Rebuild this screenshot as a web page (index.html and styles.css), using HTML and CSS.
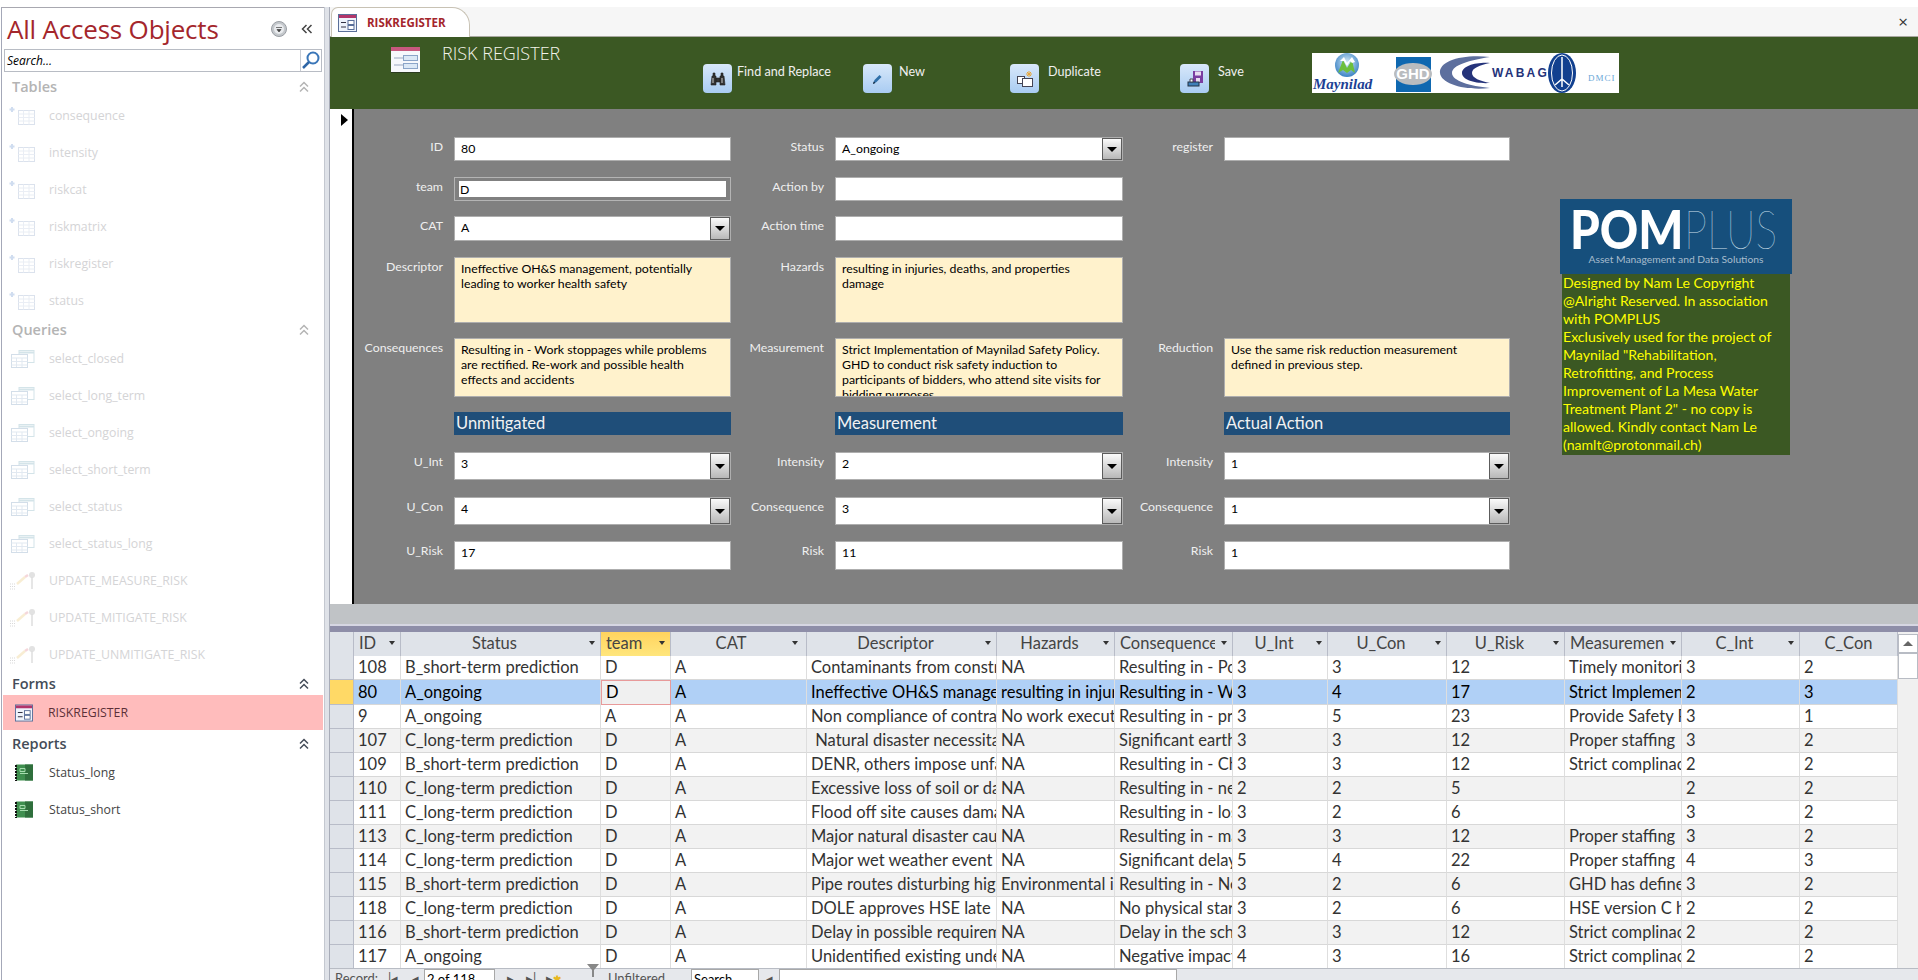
FILE: index.html
```html
<!DOCTYPE html>
<html lang="en">
<head>
  <meta charset="UTF-8" />
  <meta name="viewport" content="width=device-width, initial-scale=1.0"/>
  <title>RISK REGISTER</title>
  <link rel="stylesheet" href="styles.css">
</head>
<body>
  <svg class="defs" width="0" height="0">
    <symbol id="i-table" viewBox="0 0 28 20">
      <path d="M4 1v5M1.500 3.500h5" stroke="#3f74c4" stroke-width="2"/>
      <rect x="10.500" y="4.500" width="16" height="14" fill="#fff" stroke="#6d8bb5"/>
      <path d="M10.500 8h16M10.500 11.500h16M10.500 15h16M15.500 4.500v14M21 4.500v14" stroke="#a9bcd6"/>
    </symbol>
    <symbol id="i-query" viewBox="0 0 28 20">
      <rect x="11" y="1.500" width="15" height="12" fill="#fff" stroke="#4f93a8"/>
      <path d="M11 3.500h15" stroke="#4f93a8" stroke-width="2"/>
      <rect x="3.500" y="5.500" width="16" height="13" fill="#fff" stroke="#4a78a8"/>
      <path d="M3.500 9h16M3.500 12.500h16M3.500 16h16M8.500 9v9M14 9v9" stroke="#8aa8c8"/>
    </symbol>
    <symbol id="i-update" viewBox="0 0 28 20">
      <path d="M2 13h5M2 15.500h5M2 18h5" stroke="#666" stroke-dasharray="1 1"/>
      <path d="M9 13l8-7" stroke="#e6b84a" stroke-width="2.500"/>
      <path d="M17 6l3-2" stroke="#d65a6a" stroke-width="2.500"/>
      <circle cx="24" cy="4" r="3" fill="#888"/>
      <path d="M24 6v12" stroke="#777" stroke-width="1.500"/>
    </symbol>
    <symbol id="i-form" viewBox="0 0 19 18">
      <rect x=".500" y=".500" width="18" height="17" fill="#eef3fb" stroke="#5a6f99"/>
      <rect x="1" y="1" width="17" height="3" fill="#b2356a"/>
      <path d="M3 8.500h5M3 13h5" stroke="#334" stroke-width="1.200"/>
      <rect x="10" y="6.500" width="6" height="4" fill="#fff" stroke="#5a6f99"/>
      <rect x="10" y="11.500" width="6" height="4" fill="#fff" stroke="#5a6f99"/>
    </symbol>
    <symbol id="i-form-lg" viewBox="0 0 31 27" preserveAspectRatio="none">
      <rect x="1" y="1" width="29" height="25" fill="#f6f8fc"/>
      <rect x="1" y="1" width="29" height="4" fill="#c8587e"/>
      <path d="M4 12h10M4 19h10" stroke="#9aa8c0"/>
      <rect x="13.500" y="9.500" width="14" height="5" fill="#dbe8f6" stroke="#8aa4c8"/>
      <rect x="13.500" y="17.500" width="14" height="5" fill="#dbe8f6" stroke="#8aa4c8"/>
      <path d="M1 26.500h29" stroke="#2a3a20" stroke-width="1"/>
    </symbol>
    <symbol id="i-report" viewBox="0 0 18 17">
      <rect x="1" y="0" width="17" height="16" fill="#3f8f4f"/>
      <rect x="10" y="0" width="8" height="16" fill="#2f6f3c"/>
      <path d="M1 .5v16" stroke="#111" stroke-width="2" stroke-dasharray="2 1"/>
      <path d="M5 4h5v3h-5zM5 9h8" fill="none" stroke="#a6dcae"/>
    </symbol>
    <symbol id="i-chev" viewBox="0 0 12 12">
      <path d="M2 5.500l4-4 4 4M2 10.500l4-4 4 4" fill="none" stroke="currentColor" stroke-width="1.500"/>
    </symbol>
  </svg>

  <div class="app">
    <aside class="nav">
      <div class="nav-title">
        <span class="nav-name">All Access Objects</span>
        <svg class="nav-menu" width="16" height="16" viewBox="0 0 16 16">
          <circle cx="8" cy="8" r="7.500" fill="#c4c8cc" stroke="#9a9ea4"/>
          <circle cx="8" cy="8" r="5" fill="#e9ebee"/>
          <path d="M5 6.500h6M6 8.500h4l-2 2.500z" fill="#444" stroke="#444" stroke-width=".7"/>
        </svg>
        <svg class="nav-collapse" width="12" height="12" viewBox="0 0 12 12">
          <path d="M5.500 2l-4 4 4 4M10.500 2l-4 4 4 4" fill="none" stroke="#444" stroke-width="1.500"/>
        </svg>
      </div>
      <div class="nav-search">
        <span class="nav-search-text">Search...</span>
        <span class="nav-search-btn">
          <svg width="20" height="20" viewBox="0 0 20 20">
            <circle cx="12" cy="8" r="5.500" fill="#fff" stroke="#3a76b8" stroke-width="2"/>
            <path d="M8 12l-6 6" stroke="#2f66a6" stroke-width="2.500"/>
          </svg>
        </span>
      </div>

      <div class="nav-head off">Tables <svg class="chev"><use href="#i-chev"/></svg></div>
      <div class="nav-item off"><svg class="ico"><use href="#i-table"/></svg>consequence</div>
      <div class="nav-item off"><svg class="ico"><use href="#i-table"/></svg>intensity</div>
      <div class="nav-item off"><svg class="ico"><use href="#i-table"/></svg>riskcat</div>
      <div class="nav-item off"><svg class="ico"><use href="#i-table"/></svg>riskmatrix</div>
      <div class="nav-item off"><svg class="ico"><use href="#i-table"/></svg>riskregister</div>
      <div class="nav-item off"><svg class="ico"><use href="#i-table"/></svg>status</div>

      <div class="nav-head off">Queries <svg class="chev"><use href="#i-chev"/></svg></div>
      <div class="nav-item off"><svg class="ico"><use href="#i-query"/></svg>select_closed</div>
      <div class="nav-item off"><svg class="ico"><use href="#i-query"/></svg>select_long_term</div>
      <div class="nav-item off"><svg class="ico"><use href="#i-query"/></svg>select_ongoing</div>
      <div class="nav-item off"><svg class="ico"><use href="#i-query"/></svg>select_short_term</div>
      <div class="nav-item off"><svg class="ico"><use href="#i-query"/></svg>select_status</div>
      <div class="nav-item off"><svg class="ico"><use href="#i-query"/></svg>select_status_long</div>
      <div class="nav-item off"><svg class="ico"><use href="#i-update"/></svg>UPDATE_MEASURE_RISK</div>
      <div class="nav-item off"><svg class="ico"><use href="#i-update"/></svg>UPDATE_MITIGATE_RISK</div>
      <div class="nav-item off"><svg class="ico"><use href="#i-update"/></svg>UPDATE_UNMITIGATE_RISK</div>

      <div class="nav-head">Forms <svg class="chev"><use href="#i-chev"/></svg></div>
      <div class="nav-item selected"><svg class="ico-sm"><use href="#i-form"/></svg>RISKREGISTER</div>

      <div class="nav-head">Reports <svg class="chev"><use href="#i-chev"/></svg></div>
      <div class="nav-item"><svg class="ico-sm"><use href="#i-report"/></svg>Status_long</div>
      <div class="nav-item"><svg class="ico-sm"><use href="#i-report"/></svg>Status_short</div>
    </aside>

    <div class="splitter"></div>

    <main class="main">
      <div class="tabs">
        <div class="tab"><svg class="tab-ico"><use href="#i-form"/></svg>RISKREGISTER</div>
        <span class="tab-close">×</span>
      </div>

      <div class="banner">
        <svg class="banner-ico"><use href="#i-form-lg"/></svg>
        <div class="banner-title">RISK REGISTER</div>
        <div class="tool tool-find">
          <span class="tool-btn">
            <svg width="18" height="18" viewBox="0 0 18 18"><path d="M2 15l1-9h4v9zM11 15V6h4l1 9zM7 8h4v4H7zM4 6V3h2v3M12 6V3h2v3" fill="#333" stroke="#222" stroke-width=".6"/><path d="M4 8v5M13 8v5" stroke="#ccc"/></svg>
          </span>
          Find and Replace
        </div>
        <div class="tool tool-new">
          <span class="tool-btn">
            <svg width="18" height="18" viewBox="0 0 18 18"><path d="M4 14l1.500-4 5-5 2 2-5 5z" fill="#2f6fa8"/><path d="M4 14l.800-2.500 1.500 1.500z" fill="#123"/></svg>
          </span>
          New
        </div>
        <div class="tool tool-dup">
          <span class="tool-btn">
            <svg width="20" height="20" viewBox="0 0 20 20"><rect x="2.500" y="7.500" width="7" height="7" fill="#fff" stroke="#445"/><rect x="7.500" y="9.500" width="10" height="8" fill="#fff" stroke="#445"/><path d="M14 2v6M11 5h6M12 3l4 4M16 3l-4 4" stroke="#e8a63a"/></svg>
          </span>
          Duplicate
        </div>
        <div class="tool tool-save">
          <span class="tool-btn">
            <svg width="20" height="20" viewBox="0 0 20 20"><rect x="8" y="2" width="10" height="12" fill="#7a3ea0"/><rect x="10" y="2.500" width="6" height="4" fill="#e8ddf0"/><rect x="11" y="9" width="4" height="4" fill="#e8ddf0"/><rect x="3" y="13" width="11" height="4" fill="#3f7fb8" stroke="#234"/><path d="M5 10h3v3H5z" fill="#fff" stroke="#445"/></svg>
          </span>
          Save
        </div>
        <div class="logos">
          <svg width="307" height="40" viewBox="0 0 307 40">
            <defs>
              <radialGradient id="ball" cx=".5" cy=".4" r=".6"><stop offset="0" stop-color="#d8eefa"/><stop offset="1" stop-color="#3b82c4"/></radialGradient>
            </defs>
            <circle cx="35" cy="12" r="12" fill="url(#ball)"/>
            <path d="M26 20l5-13 4 8 5-8 3 13-4-3-4 3-4-3z" fill="#6cbf3c"/>
            <path d="M28 8l4-4 3 6 5-6 3 5-3 1-2-2-3 5-3-5z" fill="#fff"/>
            <text x="1" y="36" class="logo-may">Maynilad</text>
            <rect x="84" y="4" width="35" height="35" fill="#0f68b0"/>
            <ellipse cx="101" cy="21" rx="19" ry="11" fill="#b9bcbf"/>
            <text x="101" y="26" class="logo-ghd">GHD</text>
            <path d="M178 4C150 1 127 8 128 20c1 11 26 18 50 15C158 33 140 28 140 20S158 7 178 4z" fill="#5d6f9e"/>
            <path d="M178 10c-14-1-28 3-28 10s14 11 28 10c-10-2-18-5-18-10s8-8 18-10z" fill="#25337a"/>
            <text x="180" y="24" class="logo-wab">WABAG</text>
            <ellipse cx="250" cy="20" rx="14" ry="20" fill="#12408f"/>
            <ellipse cx="250" cy="20" rx="10.500" ry="18" fill="none" stroke="#fff" stroke-width="1"/>
            <path d="M250 4v30M243 32l7-6 7 6" stroke="#fff" stroke-width="1.500" fill="none"/>
            <text x="276" y="28" class="logo-dmci">DMCI</text>
          </svg>
        </div>
      </div>

      <div class="detail">
        <div class="selector"><span class="sel-arrow"></span></div>
        <div class="form-grid">
          <label class="lbl">ID</label><div class="fld h24">80</div>
          <label class="lbl">Status</label><div class="fld h24 combo">A_ongoing<span class="drop"></span></div>
          <label class="lbl">register</label><div class="fld h24"></div>

          <label class="lbl">team</label><div class="fld h24 focus"><span class="focus-in">D</span></div>
          <label class="lbl">Action by</label><div class="fld h24"></div>
          <span></span><span></span>

          <label class="lbl">CAT</label><div class="fld h25 combo">A<span class="drop"></span></div>
          <label class="lbl">Action time</label><div class="fld h25"></div>
          <span></span><span></span>

          <label class="lbl">Descriptor</label><div class="fld memo h66">Ineffective OH&amp;S management, potentially<br>leading to worker health safety</div>
          <label class="lbl">Hazards</label><div class="fld memo h66">resulting in injuries, deaths, and properties<br>damage</div>
          <span></span><span></span>

          <label class="lbl">Consequences</label><div class="fld memo h59">Resulting in - Work stoppages while problems<br>are rectified. Re-work and possible health<br>effects and accidents</div>
          <label class="lbl">Measurement</label><div class="fld memo h59">Strict Implementation of Maynilad Safety Policy.<br>GHD to conduct risk safety induction to<br>participants of bidders, who attend site visits for<br>bidding purposes</div>
          <label class="lbl">Reduction</label><div class="fld memo h59">Use the same risk reduction measurement<br>defined in previous step.</div>

          <span></span><div class="section">Unmitigated</div>
          <span></span><div class="section">Measurement</div>
          <span></span><div class="section">Actual Action</div>

          <label class="lbl">U_Int</label><div class="fld h28 combo">3<span class="drop"></span></div>
          <label class="lbl">Intensity</label><div class="fld h28 combo">2<span class="drop"></span></div>
          <label class="lbl">Intensity</label><div class="fld h28 combo">1<span class="drop"></span></div>

          <label class="lbl">U_Con</label><div class="fld h28 combo">4<span class="drop"></span></div>
          <label class="lbl">Consequence</label><div class="fld h28 combo">3<span class="drop"></span></div>
          <label class="lbl">Consequence</label><div class="fld h28 combo">1<span class="drop"></span></div>

          <label class="lbl">U_Risk</label><div class="fld h29">17</div>
          <label class="lbl">Risk</label><div class="fld h29">11</div>
          <label class="lbl">Risk</label><div class="fld h29">1</div>

          <div class="promo">
            <div class="pom">
              <div class="pom-mark"><span class="pom-a">POM</span><span class="pom-b">PLUS</span></div>
              <div class="pom-sub">Asset Management and Data Solutions</div>
            </div>
            <div class="promo-text">Designed by Nam Le Copyright @Alright Reserved. In association with POMPLUS<br>Exclusively used for the project of Maynilad "Rehabilitation, Retrofitting, and Process Improvement of La Mesa Water Treatment Plant 2" - no copy is allowed. Kindly contact Nam Le (namlt@protonmail.ch)</div>
          </div>
        </div>
      </div>

      <div class="band"></div>

      <div class="sheet-wrap">
        <table class="sheet">
          <colgroup>
            <col class="c-sel"><col class="c-id"><col class="c-status"><col class="c-team"><col class="c-cat"><col class="c-desc"><col class="c-haz"><col class="c-cons"><col class="c-uint"><col class="c-ucon"><col class="c-urisk"><col class="c-meas"><col class="c-cint"><col class="c-ccon">
          </colgroup>
          <thead>
            <tr>
              <th class="corner"></th>
              <th><div class="th"><span class="th-l left">ID</span><i class="arr"></i></div></th>
              <th><div class="th"><span class="th-l">Status</span><i class="arr"></i></div></th>
              <th class="hl"><div class="th"><span class="th-l left">team</span><i class="arr"></i></div></th>
              <th><div class="th"><span class="th-l">CAT</span><i class="arr pin"></i></div></th>
              <th><div class="th"><span class="th-l">Descriptor</span><i class="arr"></i></div></th>
              <th><div class="th"><span class="th-l">Hazards</span><i class="arr"></i></div></th>
              <th><div class="th"><span class="th-l left">Consequence</span><i class="arr"></i></div></th>
              <th><div class="th"><span class="th-l">U_Int</span><i class="arr"></i></div></th>
              <th><div class="th"><span class="th-l">U_Con</span><i class="arr"></i></div></th>
              <th><div class="th"><span class="th-l">U_Risk</span><i class="arr"></i></div></th>
              <th><div class="th"><span class="th-l left">Measurement</span><i class="arr"></i></div></th>
              <th><div class="th"><span class="th-l">C_Int</span><i class="arr"></i></div></th>
              <th><div class="th th-end"><span class="th-l">C_Con</span></div></th>
            </tr>
          </thead>
          <tbody>
            <tr><td class="rs"></td><td>108</td><td>B_short-term prediction</td><td>D</td><td>A</td><td>Contaminants from construction</td><td>NA</td><td>Resulting in - Potential</td><td>3</td><td>3</td><td>12</td><td>Timely monitoring</td><td>3</td><td>2</td></tr>
            <tr class="cur"><td class="rs"></td><td>80</td><td>A_ongoing</td><td class="cell-on">D</td><td>A</td><td>Ineffective OH&amp;S management</td><td>resulting in injuries</td><td>Resulting in - Work</td><td>3</td><td>4</td><td>17</td><td>Strict Implementation</td><td>2</td><td>3</td></tr>
            <tr><td class="rs"></td><td>9</td><td>A_ongoing</td><td>A</td><td>A</td><td>Non compliance of contract</td><td>No work execution</td><td>Resulting in - project</td><td>3</td><td>5</td><td>23</td><td>Provide Safety Plan</td><td>3</td><td>1</td></tr>
            <tr><td class="rs"></td><td>107</td><td>C_long-term prediction</td><td>D</td><td>A</td><td>&nbsp;Natural disaster necessitates</td><td>NA</td><td>Significant earthquake</td><td>3</td><td>3</td><td>12</td><td>Proper staffing</td><td>3</td><td>2</td></tr>
            <tr><td class="rs"></td><td>109</td><td>B_short-term prediction</td><td>D</td><td>A</td><td>DENR, others impose unfair</td><td>NA</td><td>Resulting in - Changes</td><td>3</td><td>3</td><td>12</td><td>Strict complinace</td><td>2</td><td>2</td></tr>
            <tr><td class="rs"></td><td>110</td><td>C_long-term prediction</td><td>D</td><td>A</td><td>Excessive loss of soil or damage</td><td>NA</td><td>Resulting in - need</td><td>2</td><td>2</td><td>5</td><td></td><td>2</td><td>2</td></tr>
            <tr><td class="rs"></td><td>111</td><td>C_long-term prediction</td><td>D</td><td>A</td><td>Flood off site causes damage</td><td>NA</td><td>Resulting in - loss</td><td>3</td><td>2</td><td>6</td><td></td><td>3</td><td>2</td></tr>
            <tr><td class="rs"></td><td>113</td><td>C_long-term prediction</td><td>D</td><td>A</td><td>Major natural disaster causes</td><td>NA</td><td>Resulting in - major</td><td>3</td><td>3</td><td>12</td><td>Proper staffing</td><td>3</td><td>2</td></tr>
            <tr><td class="rs"></td><td>114</td><td>C_long-term prediction</td><td>D</td><td>A</td><td>Major wet weather event</td><td>NA</td><td>Significant delay</td><td>5</td><td>4</td><td>22</td><td>Proper staffing</td><td>4</td><td>3</td></tr>
            <tr><td class="rs"></td><td>115</td><td>B_short-term prediction</td><td>D</td><td>A</td><td>Pipe routes disturbing high</td><td>Environmental impact</td><td>Resulting in - Negative</td><td>3</td><td>2</td><td>6</td><td>GHD has defined</td><td>3</td><td>2</td></tr>
            <tr><td class="rs"></td><td>118</td><td>C_long-term prediction</td><td>D</td><td>A</td><td>DOLE approves HSE late</td><td>NA</td><td>No physical start</td><td>3</td><td>2</td><td>6</td><td>HSE version C has</td><td>2</td><td>2</td></tr>
            <tr><td class="rs"></td><td>116</td><td>B_short-term prediction</td><td>D</td><td>A</td><td>Delay in possible requirement</td><td>NA</td><td>Delay in the schedule</td><td>3</td><td>3</td><td>12</td><td>Strict complinace</td><td>2</td><td>2</td></tr>
            <tr><td class="rs"></td><td>117</td><td>A_ongoing</td><td>D</td><td>A</td><td>Unidentified existing underground</td><td>NA</td><td>Negative impact</td><td>4</td><td>3</td><td>16</td><td>Strict complinace</td><td>2</td><td>2</td></tr>
          </tbody>
        </table>
        <div class="vscroll">
          <div class="vs-btn"><span class="vs-up"></span></div>
          <div class="vs-thumb"></div>
        </div>
      </div>

      <div class="recbar">
        <span class="rec-label">Record:</span>
        <span class="rec-glyph g-first">|◂</span>
        <span class="rec-glyph g-prev">◂</span>
        <span class="rec-box">2 of 118</span>
        <span class="rec-glyph g-next">▸</span>
        <span class="rec-glyph g-last">▸|</span>
        <span class="rec-glyph g-new">▸<b>✱</b></span>
        <svg class="rec-filter" width="14" height="14" viewBox="0 0 14 14"><path d="M1 0h12L8 6v7H6V6z" fill="#888"/></svg>
        <span class="rec-unf">Unfiltered</span>
        <span class="rec-search">Search</span>
        <span class="rec-glyph g-left">◂</span>
        <span class="rec-track"></span>
      </div>
    </main>
  </div>
</body>
</html>
```

FILE: styles.css
```css
* {
  box-sizing: border-box;
}
html, body {
  margin: 0;
  padding: 0;
  height: 100%;
  overflow: hidden;
  background: #fff;
}
.defs {
  position: absolute;
}
.app {
  display: flex;
  height: 980px;
  width: 1918px;
  overflow: hidden;
}

/* navigation pane */
.nav {
  width: 323px;
  height: 973px;
  margin: 7px 0 0 1px;
  flex-shrink: 0;
  border-left: 1px solid #a4a8b8;
  border-top: 1px solid #a8a8b0;
  font-family: "Open Sans", sans-serif;
  background: #fff;
}
.nav-title {
  display: flex;
  align-items: center;
  height: 41px;
  padding: 0 8px 0 5px;
}
.nav-name {
  flex: 1;
  font-size: 26px;
  color: #a4262c;
  letter-spacing: -.2px;
}
.nav-menu {
  margin-right: 14px;
}
.nav-collapse {
  margin-right: 3px;
}
.nav-search {
  display: flex;
  height: 23px;
  margin: 0 2px 4px 2px;
  border: 1px solid #b8bcc4;
  font-size: 12px;
  font-style: italic;
  color: #000;
}
.nav-search-text {
  flex: 1;
  line-height: 21px;
  padding-left: 2px;
}
.nav-search-btn {
  width: 21px;
  border-left: 1px solid #c8ccd4;
  line-height: 0;
}
.nav-head {
  display: flex;
  align-items: center;
  justify-content: space-between;
  height: 21px;
  padding: 0 14px 0 10px;
  font-size: 14.500px;
  font-weight: 600;
  color: #444c58;
}
.nav-head.off {
  color: #b4b4b4;
}
.nav-head.off:first-of-type {
  margin-bottom: 1px;
}
.chev {
  width: 12px;
  height: 12px;
}
.nav-item {
  display: flex;
  align-items: center;
  height: 37px;
  font-size: 12.300px;
  color: #444;
}
.nav-item.off {
  color: #d4d4d6;
}
.nav-item.off .ico {
  opacity: .24;
}
.nav-item.selected {
  height: 35px;
  margin: 1px 1px 3px 1px;
  background: #ffbcbc;
  color: #5c3038;
}
.nav-item.selected .ico-sm {
  margin-left: 12px;
  margin-right: 15px;
}
.ico {
  width: 28px;
  height: 20px;
  margin: 0 13px 0 6px;
  flex-shrink: 0;
}
.ico-sm {
  width: 18px;
  height: 18px;
  margin: 0 16px 0 13px;
  flex-shrink: 0;
}
.splitter {
  width: 6px;
  height: 973px;
  margin-top: 7px;
  flex-shrink: 0;
  background: #dfe2e8;
  border-left: 1px solid #c4c8d0;
  border-right: 1px solid #a8acb8;
}

/* main area */
.main {
  width: 1588px;
  height: 980px;
  flex-shrink: 0;
  overflow: hidden;
  padding-top: 7px;
  display: flex;
  flex-direction: column;
  background: #fff;
}
.tabs {
  display: flex;
  align-items: flex-end;
  justify-content: space-between;
  height: 30px;
  flex-shrink: 0;
  background: #f6f6f6;
  border-bottom: 1px solid #a8a8a0;
}
.tab {
  display: flex;
  align-items: center;
  width: 139px;
  height: 30px;
  margin-left: 1px;
  margin-bottom: -1px;
  background: #fff;
  border: 1px solid #c8c2b4;
  border-bottom: none;
  border-radius: 7px 18px 0 0;
  font-family: "Open Sans", sans-serif;
  font-size: 11.500px;
  font-weight: 700;
  color: #a4262c;
}
.tab-ico {
  width: 19px;
  height: 18px;
  margin: 0 10px 0 6px;
}
.tab-close {
  align-self: center;
  margin-right: 10px;
  font-family: "Open Sans", sans-serif;
  font-size: 17px;
  color: #333;
}
.banner {
  position: relative;
  height: 72px;
  flex-shrink: 0;
  background: #3b5823;
  color: #f0f0f0;
  font-family: "Lato", sans-serif;
}
.banner-ico {
  position: absolute;
  left: 60px;
  top: 9px;
  width: 31px;
  height: 27px;
}
.banner-title {
  position: absolute;
  left: 112px;
  top: 4px;
  font-family: "Open Sans", sans-serif;
  font-weight: 300;
  font-size: 18px;
  line-height: 24px;
  color: #f4f4ea;
}
.tool {
  position: absolute;
  top: 27px;
  display: flex;
  font-size: 12.600px;
  line-height: 16px;
}
.tool-find { left: 373px; }
.tool-new { left: 533px; }
.tool-dup { left: 680px; }
.tool-save { left: 850px; }
.tool-btn {
  display: flex;
  align-items: center;
  justify-content: center;
  width: 29px;
  height: 29px;
  margin-right: 5px;
  border-radius: 4px;
  background: linear-gradient(#d8e8fa, #a9ccf2);
}
.tool-new .tool-btn { margin-right: 7px; }
.tool-dup .tool-btn,
.tool-save .tool-btn { margin-right: 9px; }
.logos {
  position: absolute;
  left: 982px;
  top: 16px;
  width: 307px;
  height: 40px;
  background: #fff;
}
.logo-may {
  font: italic bold 15px "Liberation Serif", serif;
  fill: #1c3f94;
}
.logo-ghd {
  font: bold 15px "Liberation Sans", sans-serif;
  fill: #fff;
  text-anchor: middle;
}
.logo-wab {
  font: bold 12px "Liberation Sans", sans-serif;
  letter-spacing: 2.200px;
  fill: #25337a;
}
.logo-dmci {
  font: 9px "Liberation Serif", serif;
  letter-spacing: 1px;
  fill: #6ba8d8;
}

/* single form */
.detail {
  display: flex;
  height: 495px;
  flex-shrink: 0;
}
.selector {
  width: 24px;
  flex-shrink: 0;
  padding: 5px 0 0 11px;
  border-right: 2px solid #000;
  background: #fff;
}
.sel-arrow {
  display: block;
  width: 0;
  height: 0;
  border-left: 7px solid #000;
  border-top: 6px solid transparent;
  border-bottom: 6px solid transparent;
}
.form-grid {
  position: relative;
  flex: 1;
  display: grid;
  grid-template-columns: 100px 277px 104px 288px 101px 286px;
  grid-template-rows: 40px 39px 41px 81px 74px 40px 45px 44px 29px;
  padding-top: 28px;
  background: #808080;
  font-family: "Lato", sans-serif;
  font-size: 12.300px;
}
.lbl {
  padding-right: 11px;
  text-align: right;
  line-height: 20px;
  color: #efefef;
}
.fld {
  padding: 0 6px;
  background: #fff;
  border: 1px solid #aeaeae;
  color: #000;
  line-height: 22px;
}
.h24 { height: 24px; }
.h25 { height: 25px; }
.h28 { height: 28px; line-height: 21px; }
.h29 { height: 29px; line-height: 21px; }
.h59 { height: 59px; }
.h66 { height: 66px; }
.combo {
  display: flex;
  justify-content: space-between;
  padding-right: 0;
}
.drop {
  display: flex;
  align-items: center;
  justify-content: center;
  width: 20px;
  border: 1px solid #5c5c5c;
  background: linear-gradient(#fafafa, #b8b8b8);
}
.drop::after {
  content: "";
  border-top: 5px solid #000;
  border-left: 5px solid transparent;
  border-right: 5px solid transparent;
}
.focus {
  padding: 3px 4px;
  background: #808080;
  border: 1px solid #b4b4b4;
}
.focus-in {
  display: block;
  height: 16px;
  padding-left: 1px;
  background: #fff;
  line-height: 17px;
}
.memo {
  padding: 3px 6px;
  background: #fff2cc;
  line-height: 15px;
  white-space: nowrap;
  overflow: hidden;
}
.section {
  height: 23px;
  padding-left: 2px;
  background: #1f4e79;
  color: #f2f2f2;
  font-size: 16.500px;
  line-height: 23px;
}
.promo {
  position: absolute;
  left: 1206px;
  top: 90px;
  width: 232px;
}
.pom {
  height: 75px;
  padding-top: 7px;
  background: #164f7c;
  overflow: hidden;
}
.pom-mark {
  display: flex;
  height: 44px;
  padding-left: 10px;
  line-height: 46px;
  font-family: "Lato", sans-serif;
  font-size: 54px;
  color: #fff;
}
.pom-a {
  display: block;
  width: 114px;
  font-weight: 900;
  transform: scaleX(.88);
  transform-origin: left;
}
.pom-b {
  display: block;
  font-weight: 100;
  color: #cfe0ec;
  transform: scaleX(.76);
  transform-origin: left;
}
.pom-sub {
  margin-top: 3px;
  text-align: center;
  font-size: 10.300px;
  color: #a7bccd;
}
.promo-text {
  width: 228px;
  height: 181px;
  margin-left: 2px;
  padding: 0 14px 0 1px;
  background: #3b5823;
  color: #ffff00;
  font-size: 14.100px;
  line-height: 18px;
}

.band {
  height: 28px;
  flex-shrink: 0;
  background: #c0c3c6;
  border-bottom: 6px solid #8e8ea8;
  box-shadow: inset 0 -2px 0 #d6d6e2;
}

/* datasheet */
.sheet-wrap {
  display: flex;
  height: 336px;
  flex-shrink: 0;
  background: #f0f0f0;
}
.sheet {
  width: 1568px;
  height: 336px;
  table-layout: fixed;
  border-collapse: separate;
  border-spacing: 0;
  font-family: "Lato", sans-serif;
  font-size: 16.500px;
  color: #333;
}
.c-sel { width: 24px; }
.c-id { width: 47px; }
.c-status { width: 200px; }
.c-team { width: 70px; }
.c-cat { width: 136px; }
.c-desc { width: 190px; }
.c-haz { width: 118px; }
.c-cons { width: 118px; }
.c-uint { width: 95px; }
.c-ucon { width: 119px; }
.c-urisk { width: 118px; }
.c-meas { width: 117px; }
.c-cint { width: 118px; }
.c-ccon { width: 98px; }
.sheet th {
  height: 24px;
  padding: 0;
  font-weight: 400;
  background: #dfe3e9;
  border-right: 1px solid #b8bcc8;
}
.sheet th.corner {
  background: #dfe3e9;
}
.sheet th.hl {
  background: linear-gradient(#ffd35e, #ffe67c);
}
.th {
  display: flex;
  align-items: center;
  height: 22px;
  margin-bottom: 2px;
  color: #444;
  padding: 0 5px;
}
.th-l {
  flex: 1;
  min-width: 0;
  overflow: hidden;
  white-space: nowrap;
  text-align: center;
}
.th-l.left {
  text-align: left;
}
.arr {
  flex-shrink: 0;
  margin-left: 6px;
  border-top: 4px solid #333;
  border-left: 3px solid transparent;
  border-right: 3px solid transparent;
}
.arr.pin {
  margin-right: 3px;
}
.sheet td {
  height: 24px;
  padding: 0 1px 1px 4px;
  line-height: 22px;
  overflow: hidden;
  white-space: nowrap;
  border-right: 1px solid #dedede;
  border-bottom: 1px solid #d8d8d8;
  background: #fff;
}
.sheet tbody tr:nth-child(even) td {
  background: #f2f2f2;
}
.sheet td.rs,
.sheet tbody tr:nth-child(even) td.rs {
  background: #dfe3e9;
  border-right: 1px solid #b8bcc8;
  border-bottom: 1px solid #b8bcc8;
}
.sheet tr.cur td,
.sheet tbody tr.cur:nth-child(even) td {
  background: #b0d0f6;
  color: #000;
}
.sheet tr.cur td.rs,
.sheet tbody tr.cur:nth-child(even) td.rs {
  background: #ffd966;
}
.sheet tr.cur td.cell-on,
.sheet tbody tr.cur:nth-child(even) td.cell-on {
  background: #f0f0f0;
  border: 1px solid #e89a9a;
}
.vscroll {
  width: 20px;
  flex-shrink: 0;
  padding-top: 2px;
  background: #f0f0f0;
}
.vs-btn {
  display: flex;
  align-items: center;
  justify-content: center;
  height: 19px;
  background: #fff;
  border: 1px solid #b8bcc4;
}
.vs-up {
  border-bottom: 5px solid #666;
  border-left: 5px solid transparent;
  border-right: 5px solid transparent;
}
.vs-thumb {
  height: 26px;
  background: #fff;
  border: 1px solid #b8bcc4;
}

/* record navigation */
.recbar {
  position: relative;
  height: 24px;
  flex-shrink: 0;
  background: #e6e8ec;
  border-top: 1px solid #b8bcc4;
  font-family: "Lato", sans-serif;
  font-size: 13px;
  color: #555;
}
.recbar > * {
  position: absolute;
  top: 0;
  line-height: 18px;
}
.rec-label { left: 5px; }
.g-first { left: 58px; }
.g-prev { left: 82px; }
.rec-box {
  left: 94px;
  width: 71px;
  height: 20px;
  padding-left: 2px;
  background: #fff;
  border: 1px solid #a8a8a8;
  color: #000;
}
.g-next { left: 177px; }
.g-last { left: 196px; }
.g-new { left: 216px; }
.g-new b {
  color: #e8b820;
  font-size: 10px;
}
.rec-filter { left: 256px; top: -5px; }
.rec-unf { left: 278px; }
.rec-search {
  left: 361px;
  width: 68px;
  height: 20px;
  padding-left: 2px;
  background: #fff;
  border: 1px solid #a8a8a8;
  color: #000;
}
.g-left { left: 436px; }
.rec-track {
  left: 449px;
  width: 398px;
  height: 20px;
  background: #fff;
  border: 1px solid #a8a8a8;
}
```
